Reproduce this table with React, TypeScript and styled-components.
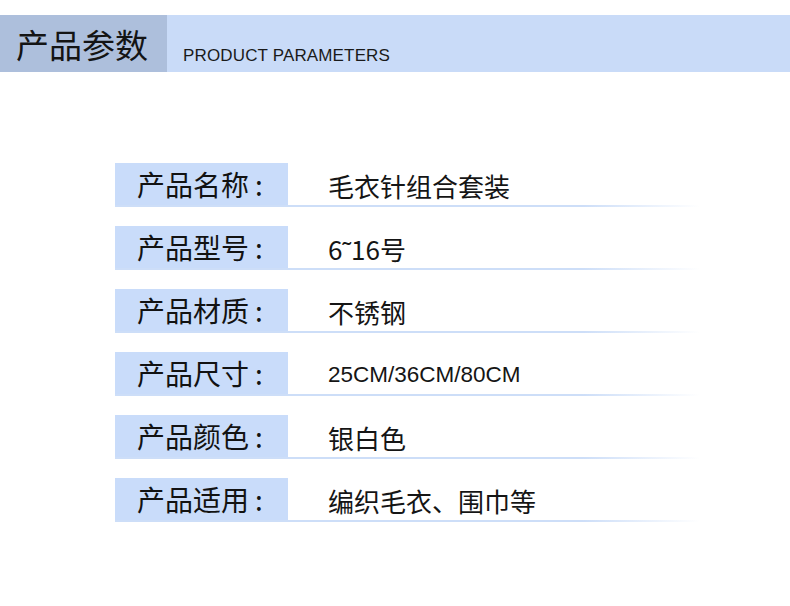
import styled, { createGlobalStyle } from "styled-components";

const Global = createGlobalStyle`
  body {
    margin: 0;
    background: #fff;
    font-family: "Noto Sans CJK SC", "Liberation Sans", sans-serif;
    color: #111;
  }
`;

const Page = styled.div`
  width: 790px;
  height: 606px;
  padding-top: 15px;
  box-sizing: border-box;
`;

const Header = styled.div`
  display: flex;
  height: 57px;
  background: #c9dbf8;
`;

const TitleBox = styled.div`
  width: 167px;
  background: #adbfdc;
  display: flex;
  align-items: center;
  padding-left: 16px;
  box-sizing: border-box;
  font-size: 33px;
  color: #141414;
`;

const SubTitle = styled.div`
  padding-left: 16px;
  padding-top: 31px;
  font-family: "Liberation Sans", Arial, sans-serif;
  font-size: 17px;
  letter-spacing: 0.15px;
  color: #1a1a1a;
`;

const Table = styled.div`
  margin: 91px 0 0 115px;
  width: 585px;
  display: flex;
  flex-direction: column;
  gap: 19px;
`;

const Row = styled.div`
  display: flex;
  height: 44px;
  padding-bottom: 2px;
  box-sizing: border-box;
  background: linear-gradient(
      to right,
      #cddef8 0%,
      #cddef8 80%,
      rgba(205, 222, 248, 0) 100%
    )
    left bottom / 100% 2px no-repeat;
`;

const Label = styled.div`
  width: 173px;
  background: #c9dcfa;
  display: flex;
  align-items: center;
  padding-left: 22px;
  box-sizing: border-box;
  font-size: 28px;
  color: #121212;
`;

const Colon = styled.span`
  margin-left: 6px;
`;

const Value = styled.div<{ $latin?: boolean }>`
  display: flex;
  align-items: center;
  padding: 3px 0 0 40px;
  font-size: ${(p) => (p.$latin ? "22.5px" : "26px")};
  font-family: ${(p) =>
    p.$latin
      ? '"Liberation Sans", Arial, sans-serif'
      : '"Noto Sans CJK SC", sans-serif'};
  color: #151515;
`;

const rows: { label: string; value: string; latin?: boolean }[] = [
  { label: "产品名称", value: "毛衣针组合套装" },
  { label: "产品型号", value: "6˜16号" },
  { label: "产品材质", value: "不锈钢" },
  { label: "产品尺寸", value: "25CM/36CM/80CM", latin: true },
  { label: "产品颜色", value: "银白色" },
  { label: "产品适用", value: "编织毛衣、围巾等" },
];

export default function App() {
  return (
    <Page>
      <Global />
      <Header>
        <TitleBox>产品参数</TitleBox>
        <SubTitle>PRODUCT PARAMETERS</SubTitle>
      </Header>
      <Table>
        {rows.map((r) => (
          <Row key={r.label}>
            <Label>
              {r.label}
              <Colon>:</Colon>
            </Label>
            <Value $latin={r.latin}>{r.value}</Value>
          </Row>
        ))}
      </Table>
    </Page>
  );
}
